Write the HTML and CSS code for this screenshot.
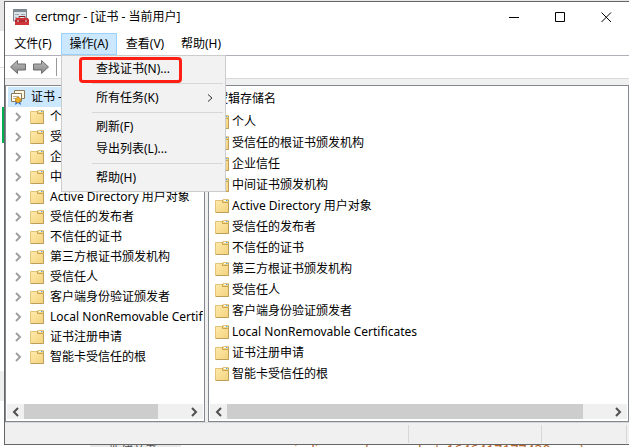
FILE: index.html
```html
<!DOCTYPE html>
<html lang="zh-CN">
<head>
    <meta charset="UTF-8">
    <meta name="viewport" content="width=device-width, initial-scale=1.0">
    <title>certmgr - [证书 - 当前用户]</title>
    <link rel="stylesheet" href="styles.css">
</head>
<body>
    <!-- Shared icons -->
    <svg class="symbols" aria-hidden="true">
        <defs>
            <linearGradient id="folderFill" x1="0" y1="0" x2="1" y2="1">
                <stop offset="0" stop-color="#ffebae"/>
                <stop offset="1" stop-color="#f3d27c"/>
            </linearGradient>
            <linearGradient id="arrowFill" x1="0" y1="0" x2="0" y2="1">
                <stop offset="0" stop-color="#bdbdbd"/>
                <stop offset="1" stop-color="#858585"/>
            </linearGradient>
        </defs>
        <symbol id="folder" viewBox="0 0 15 14">
            <path d="M.5 1.500H7L8 .5H13.500V13.500H.5Z" fill="url(#folderFill)" stroke="#e3c377"/>
            <path d="M7.500 1V3.500H13.500V1" fill="#f3d88c" stroke="#c9a550"/>
            <path d="M9 1.500H13" stroke="#fff"/>
            <path d="M11 1.500H12.500" stroke="#4aa3df"/>
            <path d="M13.500 4V13.500H1" fill="none" stroke="#bd9f5c"/>
        </symbol>
        <symbol id="chevron" viewBox="0 0 7 10">
            <path d="M1 1L5 5L1 9" fill="none" stroke="currentColor" stroke-width="2"/>
        </symbol>
        <symbol id="arrow" viewBox="0 0 16 14">
            <path d="M.5 7L7.500 .5V4H15.500V10H7.500V13.500Z" fill="url(#arrowFill)" stroke="#6d6d6d"/>
        </symbol>
    </svg>

    <main class="window">
        <header class="titlebar">
            <svg class="app-icon" viewBox="0 0 16 16" aria-hidden="true">
                <path d="M.5 .5H13.500V12H.5Z" fill="#dce3e8" stroke="#7b858d"/>
                <path d="M1 2H13" stroke="#7f8c96" stroke-width="2"/>
                <path d="M2 5.500H6M2 8.500H4M8 5.500H12" stroke="#97a6b2"/>
                <path d="M6 9V7.500H12V9" fill="none" stroke="#8b1f22"/>
                <path d="M3 9H15L16 11V16H2V11Z" fill="#cf3538"/>
                <path d="M2 12H16" stroke="#8d1d20"/>
                <path d="M5 11V13M13 11V13" stroke="#eee"/>
            </svg>
            <h1>certmgr - [证书 - 当前用户]</h1>
            <div class="controls">
                <button type="button" aria-label="最小化"><svg viewBox="0 0 11 11"><path d="M0 5.500H10"/></svg></button>
                <button type="button" aria-label="最大化"><svg viewBox="0 0 11 11"><path d="M.5 .5H9.500V9.500H.5Z"/></svg></button>
                <button type="button" aria-label="关闭"><svg viewBox="0 0 11 11"><path d="M.5 .5L10 10M10 .5L.5 10"/></svg></button>
            </div>
        </header>

        <nav class="menubar">
            <button type="button">文件(F)</button>
            <div class="menu-holder">
                <button type="button" class="open" aria-expanded="true">操作(A)</button>
                <div class="menu">
                    <button type="button" class="marked">查找证书(N)...</button>
                    <hr>
                    <button type="button">所有任务(K)<svg class="submenu" aria-hidden="true" viewBox="0 0 6 8"><path d="M1 0.500L5 4L1 7.500"/></svg></button>
                    <hr>
                    <button type="button">刷新(F)</button>
                    <button type="button">导出列表(L)...</button>
                    <hr>
                    <button type="button">帮助(H)</button>
                </div>
            </div>
            <button type="button">查看(V)</button>
            <button type="button">帮助(H)</button>
        </nav>

        <div class="toolbar">
            <button type="button" aria-label="后退"><svg><use href="#arrow"/></svg></button>
            <button type="button" aria-label="前进" class="forward"><svg><use href="#arrow"/></svg></button>
            <span class="divider"></span>
        </div>

        <div class="panes">
            <section class="pane tree">
                <div class="content">
                    <div class="root">
                        <svg viewBox="0 0 16 16" aria-hidden="true">
                            <path d="M4.500 1.500H14.500V9.500H4.500Z" fill="#fff8e4" stroke="#8e7a55"/>
                            <path d="M1.500 4.500H11.500V12.500H1.500Z" fill="#fffdf5" stroke="#8e7a55"/>
                            <path d="M3 7.500H9M3 9.500H6" stroke="#b9b1a0"/>
                            <path d="M6 11L5 16L8 14L11 16L10 11Z" fill="#2d67c4"/>
                            <circle cx="8" cy="11" r="2.500" fill="#efb42b" stroke="#c98a18"/>
                        </svg>
                        <span>证书 - 当前用户</span>
                    </div>
                    <ul id="tree"></ul>
                </div>
                <div class="scrollbar">
                    <button type="button" aria-label="向左滚动" class="left"><svg><use href="#chevron"/></svg></button>
                    <div class="track"><div class="thumb"></div></div>
                    <button type="button" aria-label="向右滚动"><svg><use href="#chevron"/></svg></button>
                </div>
            </section>
            <section class="pane list">
                <div class="content">
                    <h2>逻辑存储名</h2>
                    <ul id="list"></ul>
                </div>
                <div class="scrollbar">
                    <button type="button" aria-label="向左滚动" class="left"><svg><use href="#chevron"/></svg></button>
                    <div class="track"><div class="thumb"></div></div>
                    <button type="button" aria-label="向右滚动"><svg><use href="#chevron"/></svg></button>
                </div>
            </section>
        </div>

        <footer class="statusbar"><span></span><span></span><span></span></footer>
    </main>

    <!-- Page behind the window -->
    <div class="behind">
        <span class="tab">新建音书</span>
        <span class="link">judimages/screenshot_1646417177430.png)</span>
    </div>

    <script src="script.js"></script>
</body>
</html>
```

FILE: styles.css
```css
*,
*::after {
    box-sizing: border-box;
}

body {
    margin: 0;
    height: 100vh;
    padding: 1px 0 0 4px;
    display: flex;
    flex-direction: column;
    overflow: hidden;
    color: #000;
    font: 12px/20px "Noto Sans", "Noto Sans CJK SC", sans-serif;
    /* strip of the page visible to the left of the window */
    background:
        linear-gradient(#00b050, #00b050) 2px 107px / 3px 36px no-repeat,
        linear-gradient(#eee, #eee) 0 371px / 4px 30px no-repeat,
        linear-gradient(#ddd, #ddd) 0 67px / 4px 1px no-repeat,
        linear-gradient(#e8e8e8, #e8e8e8) 0 0 / 100% 31px no-repeat,
        #fff;
}

button {
    border: 0;
    margin: 0;
    padding: 0;
    background: none;
    color: inherit;
    font: inherit;
}

ul {
    list-style: none;
    margin: 0;
    padding: 0;
}

.symbols {
    position: absolute;
    width: 0;
    height: 0;
}

/* Window */
.window {
    flex: 1;
    min-height: 0;
    display: flex;
    flex-direction: column;
    border: 1px solid #666;
    border-right: 0;
    background: #f0f0f0;
}

.titlebar {
    height: 30px;
    display: flex;
    align-items: center;
    padding-left: 8px;
    background: #fff;
}

.app-icon {
    width: 16px;
    height: 16px;
}

.titlebar h1 {
    flex: 1;
    margin: 0 0 0 6px;
    font-size: 12px;
    font-weight: normal;
}

.controls {
    display: flex;
}

.controls button {
    width: 46px;
    height: 28px;
}

.controls svg {
    display: block;
    width: 11px;
    height: 11px;
    margin: 0 auto;
    fill: none;
    stroke: #000;
}

/* Menu bar */
.menubar {
    height: 24px;
    display: flex;
    align-items: flex-end;
    background: #fff;
    border-bottom: 1px solid #b0b0b8;
}

.menubar > button,
.menu-holder > button {
    display: block;
    width: 56px;
    height: 22px;
    border: 1px solid transparent;
}

.menu-holder {
    position: relative;
}

.menu-holder > .open {
    background: #cce8ff;
    border-color: #99d1ff;
}

.menu {
    position: absolute;
    top: 100%;
    left: 0;
    z-index: 2;
    width: 165px;
    padding: 2px;
    display: flex;
    flex-direction: column;
    background: #f2f2f2;
    border: 1px solid #ccc;
}

.menu button {
    position: relative;
    height: 22px;
    padding: 0 10px 0 32px;
    display: flex;
    align-items: center;
    justify-content: space-between;
}

.menu hr {
    width: 131px;
    margin: 3px 0 3px auto;
    border: 0;
    border-top: 1px solid #d7d7d7;
}

.submenu {
    width: 6px;
    height: 8px;
    fill: none;
    stroke: #333;
}

/* Red frame around the highlighted command */
.menu .marked::after {
    content: "";
    position: absolute;
    top: -1px;
    left: 15px;
    width: 103px;
    height: 26px;
    border: 3px solid #ff2013;
    border-radius: 4px;
}

/* Toolbar */
.toolbar {
    height: 23px;
    display: flex;
    align-items: center;
    gap: 7px;
    padding-left: 5px;
    background: #fff;
    border-bottom: 1px solid #d9d9d9;
}

.toolbar svg {
    display: block;
    width: 16px;
    height: 14px;
}

.forward svg {
    transform: scaleX(-1);
}

.divider {
    width: 1px;
    height: 18px;
    background: #999;
}

/* Panes */
.panes {
    flex: 1;
    min-height: 0;
    display: grid;
    grid-template-columns: 200px 1fr;
    gap: 3px;
    padding-top: 6px;
}

.pane {
    min-width: 0;
    display: flex;
    flex-direction: column;
    padding: 1px;
    background: #fff;
    border: 1px solid #828790;
}

.content {
    flex: 1;
    min-height: 0;
    overflow: hidden;
    white-space: nowrap;
}

.root {
    height: 20px;
    display: flex;
    align-items: center;
    gap: 5px;
    margin-left: 1px;
    padding-left: 2px;
    background: #cce8ff;
}

.root svg {
    width: 16px;
    height: 16px;
}

.content li {
    display: flex;
    align-items: center;
}

.folder {
    flex: none;
    width: 15px;
    height: 14px;
}

.tree li {
    height: 20px;
    gap: 5px;
    padding-left: 8px;
}

.chevron {
    flex: none;
    width: 7px;
    height: 10px;
    margin-right: 3px;
    color: #a0a0a0;
}

.list h2 {
    margin: 0;
    padding: 2px 0 2px 6px;
    font-size: 12px;
    font-weight: normal;
}

.list li {
    height: 21px;
    gap: 2px;
    padding-left: 5px;
}

/* Scrollbars */
.scrollbar {
    height: 15px;
    margin-bottom: 1px;
    display: flex;
    background: #f0f0f0;
}

.scrollbar button {
    width: 17px;
}

.scrollbar svg {
    display: block;
    width: 7px;
    height: 10px;
    margin: 0 auto;
    color: #505050;
}

.scrollbar .left svg {
    transform: scaleX(-1);
}

.track {
    flex: 1;
}

.thumb {
    height: 100%;
    background: #cdcdcd;
}

.tree .thumb {
    width: 83%;
}

.list .thumb {
    width: 93%;
}

/* Status bar */
.statusbar {
    height: 22px;
    display: flex;
    padding: 2px 2px 1px 0;
    border-top: 1px solid #d7d7d7;
}

.statusbar span {
    border-right: 1px solid #d7d7d7;
}

.statusbar span:nth-child(1) {
    width: 404px;
}

.statusbar span:nth-child(2) {
    flex: 1;
}

.statusbar span:nth-child(3) {
    width: 85px;
}

/* Page behind the window */
.behind {
    height: 2px;
    display: flex;
    overflow: hidden;
    line-height: 10px;
    white-space: nowrap;
}

.tab {
    width: 91px;
    margin-left: 86px;
    padding-left: 19px;
    background: #e8e8e8;
    color: #555;
}

.link {
    margin-left: 113px;
    color: #b5652b;
    font-size: 14px;
}
```

FILE: script.js
```javascript
const stores = [
    "个人",
    "受信任的根证书颁发机构",
    "企业信任",
    "中间证书颁发机构",
    "Active Directory 用户对象",
    "受信任的发布者",
    "不信任的证书",
    "第三方根证书颁发机构",
    "受信任人",
    "客户端身份验证颁发者",
    "Local NonRemovable Certificates",
    "证书注册申请",
    "智能卡受信任的根"
];

const chevron = '<svg class="chevron"><use href="#chevron"/></svg>';
const folder = '<svg class="folder"><use href="#folder"/></svg>';

document.getElementById("tree").innerHTML = stores
    .map(name => `<li>${chevron}${folder}<span>${name}</span></li>`)
    .join("");

document.getElementById("list").innerHTML = stores
    .map(name => `<li>${folder}<span>${name}</span></li>`)
    .join("");
```
